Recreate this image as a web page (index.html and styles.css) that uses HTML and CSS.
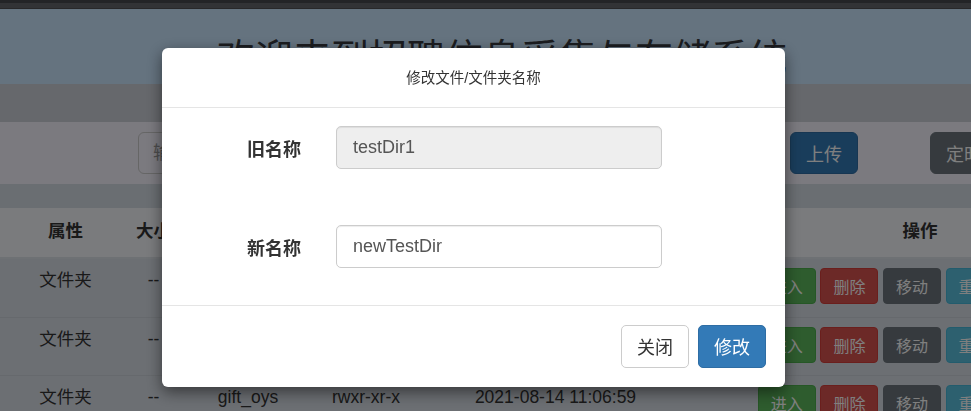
FILE: index.html
```html
<!DOCTYPE html>
<html lang="zh-CN">
<head>
<meta charset="utf-8">
<title>招聘信息采集与存储系统</title>
<link rel="stylesheet" href="styles.css">
</head>
<body>
<div class="page">
  <div class="topbar"><div class="topbar-inner"></div></div>
  <header class="banner">
    <h1 class="banner-title">欢迎来到招聘信息采集与存储系统</h1>
  </header>
  <div class="strip"></div>
  <div class="toolbar">
    <input class="path-input" type="text" placeholder="输入路径">
    <button class="tb-btn tb-primary">上传</button>
    <button class="tb-btn tb-secondary">定时任务</button>
  </div>
  <div class="strip strip-b"></div>
  <table class="files">
    <colgroup>
      <col class="c1"><col class="c2"><col class="c3"><col class="c4"><col class="c5"><col class="c6">
    </colgroup>
    <thead>
      <tr><th>属性</th><th>大小</th><th>名称</th><th>权限</th><th>修改时间</th><th>操作</th></tr>
    </thead>
    <tbody>
      <tr>
        <td>文件夹</td><td>--</td><td>testDir1</td><td>rwxr-xr-x</td><td>2021-08-14 11:06:59</td>
        <td><div class="ops"><button class="op op-green">进入</button><button class="op op-red">删除</button><button class="op op-gray">移动</button><button class="op op-teal">重命名</button><button class="op op-blue">下载</button></div></td>
      </tr>
      <tr>
        <td>文件夹</td><td>--</td><td>data</td><td>rwxr-xr-x</td><td>2021-08-14 11:06:59</td>
        <td><div class="ops"><button class="op op-green">进入</button><button class="op op-red">删除</button><button class="op op-gray">移动</button><button class="op op-teal">重命名</button><button class="op op-blue">下载</button></div></td>
      </tr>
      <tr>
        <td>文件夹</td><td>--</td><td>gift_oys</td><td>rwxr-xr-x</td><td>2021-08-14 11:06:59</td>
        <td><div class="ops"><button class="op op-green">进入</button><button class="op op-red">删除</button><button class="op op-gray">移动</button><button class="op op-teal">重命名</button><button class="op op-blue">下载</button></div></td>
      </tr>
    </tbody>
  </table>
</div>

<div class="backdrop"></div>

<div class="modal-layer">
  <div class="modal">
    <div class="modal-header">
      <h4 class="modal-title">修改文件/文件夹名称</h4>
    </div>
    <div class="modal-body">
      <div class="form-row">
        <label class="form-label">旧名称</label>
        <input class="form-input" type="text" value="testDir1" disabled>
      </div>
      <div class="form-row">
        <label class="form-label">新名称</label>
        <input class="form-input" type="text" value="newTestDir">
      </div>
    </div>
    <div class="modal-footer">
      <button class="m-btn m-default">关闭</button>
      <button class="m-btn m-primary">修改</button>
    </div>
  </div>
</div>
</body>
</html>
```

FILE: styles.css
```css
* { box-sizing: border-box; }

html, body {
  margin: 0;
  padding: 0;
  overflow: hidden;
  height: 100%;
}

body {
  font-family: "Liberation Sans", "Noto Sans CJK SC", sans-serif;
  color: #333;
  background: #d8dee6;
}

.page {
  width: 1160px;
}

/* top dark bar */
.topbar {
  height: 9px;
  padding-top: 3px;
  background: #46484e;
  border-bottom: 1px solid #505054;
}
.topbar-inner {
  height: 5px;
  background: #64666c;
}

/* banner */
.banner {
  height: 75px;
  background: #cae6fe;
  padding-left: 33px;
  width: 971px;
}
.banner-title {
  margin: 0;
  padding-top: 26px;
  font-size: 38px;
  line-height: 46px;
  font-weight: normal;
  color: #383a40;
  text-align: center;
  white-space: nowrap;
}

.strip {
  height: 38px;
  background: #ccd0d8;
}
.strip-b {
  height: 24px;
  background: #d4dce4;
}

/* toolbar */
.toolbar {
  height: 62px;
  background: #f6f4fe;
  display: flex;
  align-items: center;
  padding-left: 138px;
}
.path-input {
  flex: none;
  width: 632px;
  height: 42px;
  border: 1px solid #ccc;
  border-radius: 6px;
  background: #f6f4fe;
  padding: 0 14px;
  font-family: inherit;
  font-size: 18px;
  color: #555;
}
.path-input::placeholder { color: #999; }
.tb-btn {
  flex: none;
  height: 42px;
  border: 1px solid transparent;
  border-radius: 6px;
  padding: 0 15px;
  font-family: inherit;
  font-size: 18px;
  color: #fff;
  white-space: nowrap;
}
.tb-primary {
  margin-left: 20px;
  background: #337ab7;
  border-color: #2e6da4;
}
.tb-secondary {
  margin-left: 72px;
  background: #6c757d;
  border-color: #6c757d;
}

/* table */
.files {
  border-collapse: collapse;
  table-layout: fixed;
  width: 1141px;
  font-size: 17.5px;
}
.c1 { width: 131px; }
.c2 { width: 45px; }
.c3 { width: 144px; }
.c4 { width: 92px; }
.c5 { width: 287px; }
.c6 { width: 442px; }

.files th {
  background: #f4f6fa;
  font-weight: bold;
  height: 50px;
  padding: 10px 0 14px;
  line-height: 24px;
  text-align: center;
  border-bottom: 2px solid #dde2e8;
  white-space: nowrap;
}
.files td {
  background: #d8dee6;
  text-align: center;
  vertical-align: top;
  padding: 9px 0 12px;
  line-height: 24px;
  border-top: 1px solid #cdd3da;
  white-space: nowrap;
}
.files tbody tr:first-child td { border-top: 0; }
.files tbody tr:first-child td { padding-bottom: 13px; }

.ops {
  display: flex;
  justify-content: center;
  gap: 4.6px;
}
.op {
  height: 36px;
  padding: 0 12px;
  border: 1px solid transparent;
  border-radius: 4px;
  font-family: inherit;
  font-size: 16px;
  color: #fff;
}
.op-green { background: #5cb85c; border-color: #4cae4c; }
.op-red { background: #d9534f; border-color: #d43f3a; }
.op-gray { background: #6c757d; border-color: #6c757d; }
.op-teal { background: #5bc0de; border-color: #46b8da; }
.op-blue { background: #337ab7; border-color: #2e6da4; }

/* backdrop + modal */
.backdrop {
  position: fixed;
  inset: 0;
  background: rgba(0, 0, 0, 0.5);
}
.modal-layer {
  position: fixed;
  inset: 0;
}
.modal {
  margin: 48px 0 0 162px;
  width: 623px;
  background: #fff;
  border-radius: 6px;
  box-shadow: 0 5px 15px rgba(0, 0, 0, 0.5);
}
.modal-header {
  height: 60px;
  border-bottom: 1px solid #e5e5e5;
  display: flex;
  align-items: center;
  justify-content: center;
}
.modal-title {
  margin: 0;
  font-size: 14.5px;
  font-weight: normal;
  color: #333;
  line-height: 20px;
  padding-top: 1px;
}
.modal-body {
  padding: 18px 0 37px;
  display: flex;
  flex-direction: column;
  gap: 56px;
}
.form-row {
  display: flex;
  align-items: center;
}
.form-label {
  width: 139px;
  text-align: right;
  font-size: 18px;
  font-weight: bold;
  color: #333;
}
.form-input {
  margin-left: 35px;
  width: 326px;
  height: 43px;
  border: 1px solid #ccc;
  border-radius: 5px;
  padding: 0 16px;
  font-family: inherit;
  font-size: 18px;
  color: #555;
  background: #fff;
  box-shadow: inset 0 1px 1px rgba(0, 0, 0, 0.075);
}
.form-input:disabled {
  background: #eee;
  color: #555;
  -webkit-text-fill-color: #555;
  opacity: 1;
}
.modal-footer {
  border-top: 1px solid #e5e5e5;
  height: 82px;
  display: flex;
  align-items: center;
  justify-content: flex-end;
  gap: 9px;
  padding: 0 19px 1px 0;
}
.m-btn {
  height: 43px;
  padding: 0 15px;
  border: 1px solid transparent;
  border-radius: 5px;
  font-family: inherit;
  font-size: 18px;
}
.m-default {
  background: #fff;
  border-color: #ccc;
  color: #333;
}
.m-primary {
  background: #337ab7;
  border-color: #2e6da4;
  color: #fff;
}
```
